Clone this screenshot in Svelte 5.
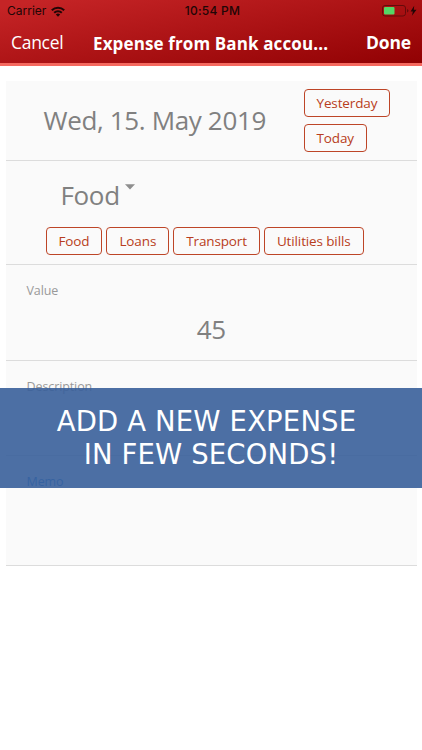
<script>
	let date = 'Wed, 15. May 2019';
	let category = 'Food';
	let value = 45;

	const days = ['Yesterday', 'Today'];
	const categories = ['Food', 'Loans', 'Transport', 'Utilities bills'];
</script>

<div class="screen">
	<header>
		<div class="status">
			<div class="carrier">
				<span>Carrier</span>
				<svg width="14" height="11" viewBox="0 0 14 11" fill="none" stroke="#210606" stroke-width="2">
					<path d="M.8 4.2a8.8 8.8 0 0 1 12.4 0" />
					<path d="M3.2 6.8a5.4 5.4 0 0 1 7.6 0" />
					<path d="M7 10.8 4.8 8.5a3.2 3.2 0 0 1 4.4 0Z" fill="#210606" stroke="none" />
				</svg>
			</div>
			<span class="time">10:54 PM</span>
			<svg class="battery" width="36" height="12" viewBox="0 0 36 12">
				<rect x=".5" y=".5" width="23" height="10.5" rx="2.5" fill="none" stroke="#650b0b" />
				<rect x="2" y="2" width="10.5" height="7.5" rx="1" fill="#54d765" />
				<path d="M25 4v3.5q1.5-.5 1.5-1.75T25 4Z" fill="#650b0b" />
				<path d="M32.2.7 28.6 6.4h2.3l-1 4.3 4.6-5.9h-2.7Z" fill="#210606" />
			</svg>
		</div>
		<nav>
			<span class="cancel">Cancel</span>
			<h1>Expense from Bank accou...</h1>
			<span class="done">Done</span>
		</nav>
	</header>

	<main>
		<section class="row date-row">
			<span class="big">{date}</span>
			<div class="days">
				{#each days as day (day)}
					<button>{day}</button>
				{/each}
			</div>
		</section>

		<section class="row category-row">
			<div class="picker">
				<span class="big">{category}</span>
				<svg width="10" height="6" viewBox="0 0 10 6"><path d="M0 .3h10L5 5.6Z" fill="#8e8e8e" /></svg>
			</div>
			<div class="chips">
				{#each categories as name (name)}
					<button>{name}</button>
				{/each}
			</div>
		</section>

		<section class="row value-row">
			<span class="label">Value</span>
			<span class="big">{value}</span>
		</section>

		<section class="row description-row">
			<span class="label">Description</span>
		</section>

		<section class="row memo-row">
			<span class="label active">Memo</span>
		</section>
	</main>

	<div class="banner">
		<span class="first">ADD A NEW EXPENSE</span>
		<span>IN FEW SECONDS!</span>
	</div>
</div>

<style>
	:global(body) {
		margin: 0;
		background: #fff;
	}

	.screen {
		position: relative;
		width: 422px;
		height: 750px;
		overflow: hidden;
		background: #fff;
		font-family: 'Open Sans', sans-serif;
		white-space: nowrap;
	}

	header {
		box-sizing: border-box;
		height: 66px;
		border-bottom: 3px solid #f5695f;
		background: linear-gradient(170deg, #c52426 5%, #900002 100%);
		background-origin: border-box;
	}

	.status {
		display: grid;
		grid-template-columns: 1fr auto 1fr;
		align-items: center;
		height: 22px;
		padding: 0 4px 0 7px;
		font: 12px/22px Inter, sans-serif;
		color: #210606;
	}

	.carrier {
		display: flex;
		align-items: center;
		gap: 5px;
	}

	.time {
		font-weight: 500;
		letter-spacing: 0.25px;
	}

	.battery {
		justify-self: end;
	}

	nav {
		display: grid;
		grid-template-columns: 82px 1fr 56px;
		height: 41px;
		padding: 0 0 0 11px;
		color: #fff;
		font-size: 17.5px;
		line-height: 40px;
	}

	.cancel {
		letter-spacing: -0.3px;
	}

	h1 {
		margin: 0;
		font-size: 17px;
		line-height: 43px;
		font-weight: 700;
		letter-spacing: 0.12px;
	}

	.done {
		font-weight: 700;
		letter-spacing: -0.2px;
	}

	main {
		margin: 15px 5px 0 5.5px;
	}

	.row {
		box-sizing: border-box;
		border-bottom: 1px solid #dcdcdc;
		background: #fafafa;
	}

	.big {
		font-size: 26px;
		line-height: 36px;
		letter-spacing: -0.35px;
		color: #808080;
	}

	.label {
		font-size: 12.5px;
		line-height: 18px;
		letter-spacing: -0.1px;
		color: #999;
	}

	.label.active {
		color: #1f7fd8;
	}

	button {
		box-sizing: border-box;
		height: 28px;
		padding: 0 12px;
		border: 1px solid #bd4527;
		border-radius: 4px;
		background: none;
		font: 13.5px/26px 'Open Sans', sans-serif;
		letter-spacing: -0.13px;
		color: #b83d20;
	}

	.date-row {
		display: grid;
		grid-template-columns: 260px 1fr;
		align-items: center;
		height: 80px;
		padding-left: 38px;
	}

	.date-row .big {
		padding-bottom: 2px;
	}

	.days {
		display: flex;
		flex-direction: column;
		align-items: flex-start;
		gap: 7px;
	}

	.category-row {
		height: 104px;
		padding: 16px 0 0 40px;
	}

	.picker {
		display: flex;
		gap: 5px;
		padding-left: 15px;
	}

	.picker svg {
		margin-top: 7px;
	}

	.chips {
		display: flex;
		gap: 4px;
		margin-top: 14px;
	}

	.value-row,
	.description-row,
	.memo-row {
		display: flex;
		flex-direction: column;
		padding: 17px 0 0 21px;
	}

	.value-row {
		height: 96px;
	}

	.value-row .big {
		align-self: center;
		margin: 11px 21px 0 0;
	}

	.description-row {
		height: 95px;
	}

	.memo-row {
		height: 110px;
	}

	.banner {
		position: absolute;
		top: 388px;
		left: 0;
		right: 0;
		box-sizing: border-box;
		height: 100px;
		padding-top: 17px;
		display: flex;
		flex-direction: column;
		align-items: center;
		background: rgba(56, 95, 154, 0.9);
		font: 27.5px/33px 'DejaVu Sans', sans-serif;
		letter-spacing: 0.15px;
		color: #fff;
	}

	.first {
		padding-right: 9px;
	}
</style>
